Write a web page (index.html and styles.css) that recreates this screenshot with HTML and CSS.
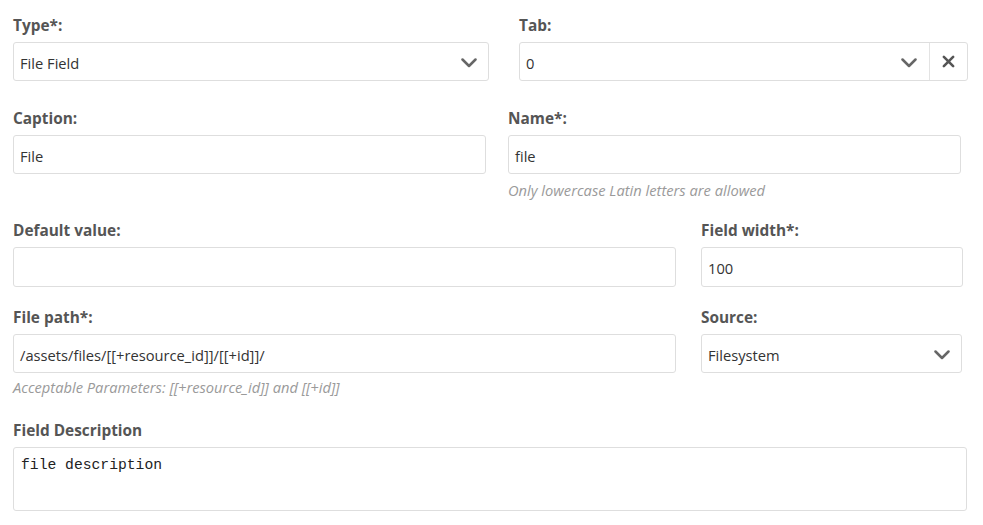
FILE: index.html
```html
<!DOCTYPE html>
<html lang="en">
<head>
<meta charset="utf-8">
<title>Field settings</title>
<link rel="stylesheet" href="styles.css">
</head>
<body>
<form class="field-form">
  <div class="row row-type">
    <div class="field">
      <label class="label">Type*:</label>
      <div class="control select">
        <span class="value">File Field</span>
        <svg class="chevron" viewBox="0 0 16 10" width="16" height="10"><path d="M1.5 1.5 L8 8 L14.5 1.5" /></svg>
      </div>
    </div>
    <div class="field">
      <label class="label">Tab:</label>
      <div class="control select clearable">
        <span class="value">0</span>
        <svg class="chevron" viewBox="0 0 16 10" width="16" height="10"><path d="M1.5 1.5 L8 8 L14.5 1.5" /></svg>
        <span class="clear">
          <svg class="cross" viewBox="0 0 14 14" width="13" height="13"><path d="M2 2 L12 12 M12 2 L2 12" /></svg>
        </span>
      </div>
    </div>
  </div>

  <div class="row row-caption">
    <div class="field">
      <label class="label">Caption:</label>
      <div class="control input"><span class="value">File</span></div>
    </div>
    <div class="field">
      <label class="label">Name*:</label>
      <div class="control input"><span class="value">file</span></div>
      <p class="help">Only lowercase Latin letters are allowed</p>
    </div>
  </div>

  <div class="row row-default">
    <div class="field">
      <label class="label">Default value:</label>
      <div class="control input tall"></div>
    </div>
    <div class="field">
      <label class="label">Field width*:</label>
      <div class="control input tall"><span class="value">100</span></div>
    </div>
  </div>

  <div class="row row-path">
    <div class="field">
      <label class="label">File path*:</label>
      <div class="control input"><span class="value">/assets/files/[[+resource_id]]/[[+id]]/</span></div>
      <p class="help hint">Acceptable Parameters: [[+resource_id]] and [[+id]]</p>
    </div>
    <div class="field">
      <label class="label">Source:</label>
      <div class="control select">
        <span class="value">Filesystem</span>
        <svg class="chevron" viewBox="0 0 16 10" width="16" height="10"><path d="M1.5 1.5 L8 8 L14.5 1.5" /></svg>
      </div>
    </div>
  </div>

  <div class="row row-desc">
    <div class="field">
      <label class="label">Field Description</label>
      <div class="control textarea">file description</div>
    </div>
  </div>
</form>
</body>
</html>
```

FILE: styles.css
```css
html, body {
  margin: 0;
  padding: 0;
  background: #fff;
}

body {
  font-family: "Open Sans", "Segoe UI", sans-serif;
  font-size: 14.7px;
  color: #333;
}

.field-form {
  padding: 16px 0 0 13px;
  width: 960px;
}

.row {
  display: grid;
  align-items: start;
}

.row-type {
  grid-template-columns: 476px 449px;
  column-gap: 30px;
}

.row-caption {
  margin-top: 28px;
  grid-template-columns: 473px 453px;
  column-gap: 22px;
}

.row-default {
  margin-top: 21px;
  grid-template-columns: 663px 262px;
  column-gap: 25px;
}

.row-path {
  margin-top: 21px;
  grid-template-columns: 663px 261px;
  column-gap: 25px;
}

.row-desc {
  margin-top: 24px;
  grid-template-columns: 954px;
}

.label {
  display: block;
  font-size: 15.4px;
  font-weight: 700;
  color: #555;
  line-height: 20px;
  margin-bottom: 6px;
}

.control {
  box-sizing: border-box;
  border: 1px solid #dedede;
  border-radius: 3px;
  background: #fff;
  height: 39px;
  display: flex;
  align-items: center;
  padding: 2px 10px 0 6px;
  color: #333;
}

.control.tall {
  height: 40px;
}

.value {
  flex: 1;
  white-space: nowrap;
}

.chevron {
  fill: none;
  stroke: #666;
  stroke-width: 2.5;
  stroke-linecap: round;
  stroke-linejoin: round;
  margin-right: 1px;
}

.clearable {
  padding-right: 0;
}

.clearable .chevron {
  margin-right: 12px;
}

.clear {
  align-self: stretch;
  margin-top: -2px;
  width: 37px;
  border-left: 1px solid #e3e3e3;
  display: flex;
  align-items: center;
  justify-content: center;
}

.cross {
  fill: none;
  stroke: #555;
  stroke-width: 2.8;
  stroke-linecap: round;
}

.help {
  margin: 6px 0 0;
  font-style: italic;
  color: #9a9a9a;
  line-height: 20px;
}

.help.hint {
  margin-top: 4px;
}

.textarea {
  height: 64px;
  align-items: flex-start;
  padding: 8px 7px;
  font-family: "Liberation Mono", "DejaVu Sans Mono", monospace;
  font-size: 14.7px;
  line-height: 18px;
  color: #222;
  width: 954px;
}
```
